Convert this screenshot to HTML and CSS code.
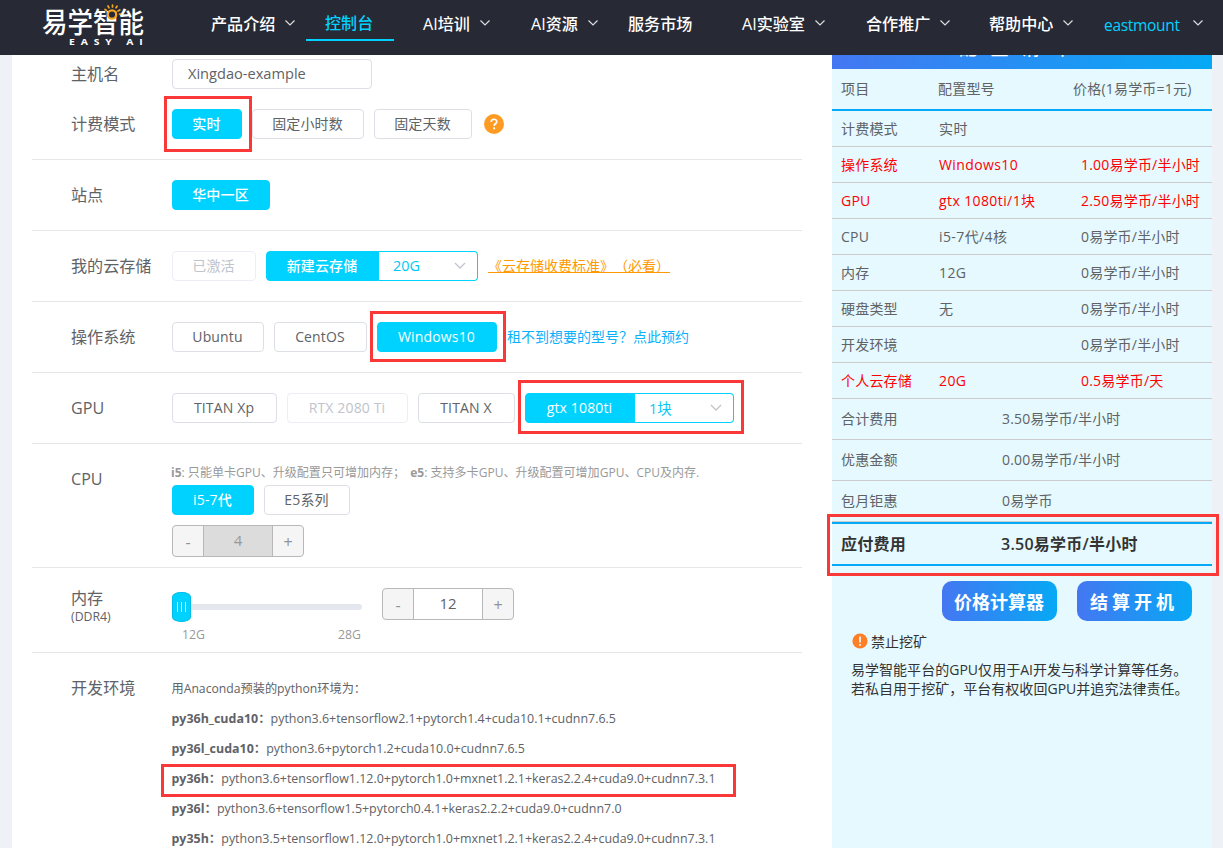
FILE: index.html
```html
<!DOCTYPE html>
<html lang="zh-CN">
<head>
  <meta charset="UTF-8" />
  <meta name="viewport" content="width=device-width, initial-scale=1.0"/>
  <title>易学智能 - 控制台</title>
  <link rel="stylesheet" href="styles.css">
</head>
<body>
  <header class="header">
    <div class="logo">
      <span class="logo-name">易学智能</span>
      <span class="logo-sub">EASY AI</span>
      <svg class="logo-sun" width="24" height="18" viewBox="0 0 24 18" fill="none" stroke="#f5a623" stroke-width="1.7" stroke-linecap="round">
        <circle cx="12" cy="10.5" r="4.2" fill="#272a35" stroke-width="2.2"/>
        <path d="M5 5.5l1.5 1M8 2l1 1.8M12.5 1v2M17 2.2l-1 1.6M19.8 6l-1.8 1M20.5 10h-1"/>
      </svg>
    </div>
    <nav class="nav">
      <a>产品介绍<svg class="caret" viewBox="0 0 10 6"><path d="M.5.5L5 5 9.5.5"/></svg></a>
      <a class="active">控制台</a>
      <a>AI培训<svg class="caret" viewBox="0 0 10 6"><path d="M.5.5L5 5 9.5.5"/></svg></a>
      <a>AI资源<svg class="caret" viewBox="0 0 10 6"><path d="M.5.5L5 5 9.5.5"/></svg></a>
      <a>服务市场</a>
      <a>AI实验室<svg class="caret" viewBox="0 0 10 6"><path d="M.5.5L5 5 9.5.5"/></svg></a>
      <a>合作推广<svg class="caret" viewBox="0 0 10 6"><path d="M.5.5L5 5 9.5.5"/></svg></a>
      <a>帮助中心<svg class="caret" viewBox="0 0 10 6"><path d="M.5.5L5 5 9.5.5"/></svg></a>
      <a class="user"><span>eastmount</span><svg class="caret" viewBox="0 0 10 6"><path d="M.5.5L5 5 9.5.5"/></svg></a>
    </nav>
  </header>

  <div class="page">
    <main class="form">
      <div class="row host">
        <label class="label">主机名</label>
        <input class="input" type="text" value="Xingdao-example">
      </div>

      <div class="row">
        <label class="label">计费模式</label>
        <div class="options">
          <button class="btn on w70">实时</button>
          <button class="btn w112">固定小时数</button>
          <button class="btn w98">固定天数</button>
          <svg class="help" width="20" height="20" viewBox="0 0 20 20">
            <circle cx="10" cy="10" r="10" fill="#ff9b22"/>
            <path d="M7.2 8c0-3.7 5.6-3.6 5.6-.2 0 2-2.7 1.9-2.7 4.1" fill="none" stroke="#fff" stroke-width="1.7"/>
            <circle cx="10.1" cy="14.3" r="1.1" fill="#fff"/>
          </svg>
        </div>
      </div>

      <div class="row">
        <label class="label">站点</label>
        <div class="options">
          <button class="btn on w98">华中一区</button>
        </div>
      </div>

      <div class="row">
        <label class="label">我的云存储</label>
        <div class="options">
          <button class="btn disabled w84">已激活</button>
          <div class="combo">
            <button class="btn on w113">新建云存储</button>
            <div class="select">20G<svg class="arrow" viewBox="0 0 12 7"><path d="M1 1l5 5 5-5"/></svg></div>
          </div>
          <a class="link-fee">《云存储收费标准》（必看）</a>
        </div>
      </div>

      <div class="row">
        <label class="label">操作系统</label>
        <div class="options">
          <button class="btn w92">Ubuntu</button>
          <button class="btn w93">CentOS</button>
          <button class="btn on w120">Windows10</button>
          <a class="link-book">租不到想要的型号？点此预约</a>
        </div>
      </div>

      <div class="row">
        <label class="label">GPU</label>
        <div class="options">
          <button class="btn w105">TITAN Xp</button>
          <button class="btn disabled w121">RTX 2080 Ti</button>
          <button class="btn w97">TITAN X</button>
          <div class="combo">
            <button class="btn on w110">gtx 1080ti</button>
            <div class="select">1块<svg class="arrow" viewBox="0 0 12 7"><path d="M1 1l5 5 5-5"/></svg></div>
          </div>
        </div>
      </div>

      <div class="row cpu">
        <label class="label">CPU</label>
        <div class="stack">
          <p class="tip"><b>i5</b>: 只能单卡GPU、升级配置只可增加内存； <b class="e5">e5</b>: 支持多卡GPU、升级配置可增加GPU、CPU及内存.</p>
          <div class="options">
            <button class="btn on w82">i5-7代</button>
            <button class="btn w86">E5系列</button>
          </div>
          <div class="stepper off"><span>-</span><span class="num">4</span><span>+</span></div>
        </div>
      </div>

      <div class="row memory">
        <label class="label">内存<small>(DDR4)</small></label>
        <div class="slider">
          <div class="track"><div class="handle"><i></i><i></i><i></i></div></div>
          <div class="scale"><span>12G</span><span>28G</span></div>
        </div>
        <div class="stepper"><span>-</span><span class="num">12</span><span>+</span></div>
      </div>

      <div class="row env">
        <label class="label">开发环境</label>
        <div class="env-list">
          <p class="intro">用Anaconda预装的python环境为：</p>
          <p><b>py36h_cuda10：</b>python3.6+tensorflow2.1+pytorch1.4+cuda10.1+cudnn7.6.5</p>
          <p><b>py36l_cuda10：</b>python3.6+pytorch1.2+cuda10.0+cudnn7.6.5</p>
          <p><b>py36h：</b>python3.6+tensorflow1.12.0+pytorch1.0+mxnet1.2.1+keras2.2.4+cuda9.0+cudnn7.3.1</p>
          <p><b>py36l：</b>python3.6+tensorflow1.5+pytorch0.4.1+keras2.2.2+cuda9.0+cudnn7.0</p>
          <p><b>py35h：</b>python3.5+tensorflow1.12.0+pytorch1.0+mxnet1.2.1+keras2.2.4+cuda9.0+cudnn7.3.1</p>
        </div>
      </div>
    </main>

    <aside class="bill">
      <h2 class="bill-title">配置清单</h2>
      <div class="bill-head"><span>项目</span><span>配置型号</span><span>价格(1易学币=1元)</span></div>
      <div class="item"><span>计费模式</span><span>实时</span><span></span></div>
      <div class="item red"><span>操作系统</span><span>Windows10</span><span>1.00易学币/半小时</span></div>
      <div class="item red"><span>GPU</span><span>gtx 1080ti/1块</span><span>2.50易学币/半小时</span></div>
      <div class="item"><span>CPU</span><span>i5-7代/4核</span><span>0易学币/半小时</span></div>
      <div class="item"><span>内存</span><span>12G</span><span>0易学币/半小时</span></div>
      <div class="item"><span>硬盘类型</span><span>无</span><span>0易学币/半小时</span></div>
      <div class="item"><span>开发环境</span><span></span><span>0易学币/半小时</span></div>
      <div class="item red"><span>个人云存储</span><span>20G</span><span>0.5易学币/天</span></div>
      <div class="sum"><span>合计费用</span><span>3.50易学币/半小时</span></div>
      <div class="sum"><span>优惠金额</span><span>0.00易学币/半小时</span></div>
      <div class="sum"><span>包月钜惠</span><span>0易学币</span></div>
      <div class="total"><span>应付费用</span><span>3.50易学币/半小时</span></div>
      <div class="actions">
        <button class="action">价格计算器</button>
        <button class="action wide">结算开机</button>
      </div>
      <div class="warn">
        <svg width="16" height="16" viewBox="0 0 16 16">
          <circle cx="8" cy="8" r="7.6" fill="#ff7f27"/>
          <path d="M8 3.5v6M8 11v1.7" stroke="#fff" stroke-width="1.6"/>
        </svg>
        <span>禁止挖矿</span>
      </div>
      <p class="notice">易学智能平台的GPU仅用于AI开发与科学计算等任务。<br>若私自用于挖矿，平台有权收回GPU并追究法律责任。</p>
    </aside>
  </div>

  <!-- 红框标注 -->
  <div class="mark mark-mode"></div>
  <div class="mark mark-os"></div>
  <div class="mark mark-gpu"></div>
  <div class="mark mark-env"></div>
  <div class="mark mark-total"></div>
</body>
</html>
```
FILE: styles.css
```css
* {
  box-sizing: border-box;
}

body {
  margin: 0;
  height: 848px;
  overflow: hidden;
  position: relative;
  background: #eef1f6;
  color: #606266;
  font-family: "Open Sans", "Noto Sans CJK SC", sans-serif;
  font-size: 14px;
}

p, h2 {
  margin: 0;
}

/* header */
.header {
  position: fixed;
  top: 0;
  left: 0;
  z-index: 10;
  width: 100%;
  height: 55px;
  background: #272a35;
  display: flex;
}

.logo {
  position: relative;
  width: 211px;
  padding: 8px 0 0 42px;
  color: #fff;
}

.logo-name {
  display: block;
  width: 103px;
  font-size: 25.5px;
  font-weight: 500;
  line-height: 26px;
  height: 26px;
  transform: scaleY(1.1);
  transform-origin: 0 0;
}

.logo-sub {
  position: absolute;
  left: 69px;
  top: 38px;
  font-size: 8px;
  font-weight: 700;
  line-height: 8px;
  letter-spacing: 4.5px;
  white-space: pre;
  transform: scaleX(1.3);
  transform-origin: 0 0;
}

.logo-sun {
  position: absolute;
  left: 100px;
  top: 4px;
}

.nav {
  display: grid;
  grid-template-columns: 114px 98px 108px 97px 114px 124px 123px 115px 119px;
  height: 46px;
  color: #fff;
  font-size: 16.1px;
  font-weight: 500;
}

.nav a {
  display: flex;
  align-items: center;
  gap: 10px;
  white-space: nowrap;
}

.nav .active {
  color: #00d2ff;
  width: 88px;
  height: 41px;
  margin-left: -19px;
  padding: 5px 0 0 19px;
  border-bottom: 2px solid #00d2ff;
}

.nav .user {
  color: #00d2ff;
  font-size: 15.5px;
  font-weight: 400;
  letter-spacing: -0.3px;
  gap: 13px;
}

.nav .user span {
  padding-top: 4px;
}

.caret {
  width: 10px;
  height: 6px;
  fill: none;
  stroke: #ddd;
  stroke-width: 1.2;
}

/* layout */
.page {
  display: flex;
  height: 819px;
  margin: 29px 11px 0 12px;
  background: #fff;
}

.form {
  width: 770px;
  margin: 0 30px 0 20px;
}

.row {
  display: flex;
  height: 71px;
  padding: 20px 0;
  border-bottom: 1px solid #e6e6e6;
}

.row.host {
  height: 60px;
  padding: 30px 0 0;
  border-bottom: 0;
}

.label {
  width: 140px;
  padding-left: 39px;
  font-size: 16.1px;
  line-height: 31px;
  flex-shrink: 0;
}

.input {
  width: 200px;
  height: 30px;
  padding: 0 15px 2px;
  border: 1px solid #dcdfe6;
  border-radius: 4px;
  font: inherit;
  font-size: 14.6px;
  color: #606266;
}

.options {
  display: flex;
  gap: 10px;
}

.btn {
  height: 30px;
  padding: 0 1px 2px 0;
  border: 1px solid #dcdfe6;
  border-radius: 4px;
  background: #fff;
  color: #606266;
  font: inherit;
  font-size: 14px;
  letter-spacing: 0.15px;
  white-space: nowrap;
}

.btn.on {
  background: #00d2ff;
  border-color: #00d2ff;
  color: #fff;
  font-weight: 500;
}

.btn.disabled {
  border-color: #ebeef5;
  color: #c0c4cc;
}

.w70 { width: 70px; }
.w82 { width: 82px; }
.w84 { width: 84px; }
.w86 { width: 86px; }
.w92 { width: 92px; }
.w93 { width: 93px; }
.w97 { width: 97px; }
.w98 { width: 98px; }
.w105 { width: 105px; }
.w110 { width: 110px; }
.w112 { width: 112px; }
.w113 { width: 113px; }
.w120 { width: 120px; }
.w121 { width: 121px; }

.help {
  margin: 5px 0 0 2px;
}

.combo {
  display: flex;
}

.combo .btn {
  border-radius: 4px 0 0 4px;
}

.select {
  display: flex;
  align-items: center;
  justify-content: space-between;
  width: 99px;
  height: 30px;
  padding: 0 11px 1px 14px;
  border: 1px solid #00d2ff;
  border-left: 0;
  border-radius: 0 4px 4px 0;
  color: #00c8f5;
  font-size: 14.4px;
}

.arrow {
  width: 12px;
  height: 7px;
  fill: none;
  stroke: #c0c4cc;
  stroke-width: 1.3;
}

.link-fee,
.link-book {
  line-height: 30px;
  white-space: nowrap;
}

.link-fee {
  color: #ff9900;
  text-decoration: underline;
  text-spacing-trim: space-all;
}

.link-book {
  color: #0ab1fa;
}

/* cpu */
.row.cpu {
  height: 124px;
}

.tip {
  height: 21px;
  margin-left: -1px;
  font-size: 12.04px;
  line-height: 17px;
  color: #999;
  white-space: nowrap;
}

.e5 {
  margin-left: 2px;
}

.stepper {
  display: grid;
  grid-template-columns: 30px 70px 30px;
  width: 132px;
  height: 32px;
  border: 1px solid #b8b8b8;
  border-radius: 4px;
  background: #f5f5f5;
  color: #909399;
  font-size: 16px;
  line-height: 32px;
  text-align: center;
  overflow: hidden;
}

.stepper .num {
  border: solid #b8b8b8;
  border-width: 0 1px;
  background: #fff;
  color: #606266;
  font-size: 15px;
  line-height: 29px;
}

.cpu .stepper {
  margin-top: 10px;
}

.stepper.off .num {
  background: #dcdcdc;
  color: #999;
}

/* memory */
.row.memory {
  height: 85px;
}

.memory .label {
  line-height: 20px;
}

.memory small {
  display: block;
  font-size: 12.3px;
  line-height: 18px;
}

.slider {
  width: 190px;
  margin-right: 20px;
}

.track {
  height: 6px;
  margin-top: 16px;
  border-radius: 3px;
  background: #e4e7ed;
}

.handle {
  position: relative;
  top: -12px;
  display: flex;
  align-items: center;
  justify-content: center;
  gap: 3px;
  width: 19px;
  height: 30px;
  border: 1px solid #00bde9;
  border-radius: 9px / 5px;
  background: #00d2ff;
}

.handle i {
  width: 1px;
  height: 10px;
  background: #fff;
}

.scale {
  display: flex;
  justify-content: space-between;
  padding: 16px 1px 0 10px;
  font-size: 12.3px;
  line-height: 18px;
  color: #999;
}

/* env */
.row.env {
  height: auto;
  border-bottom: 0;
}

.env-list {
  margin-left: -0.5px;
  font-size: 12.45px;
  line-height: 30px;
  padding-top: 1px;
  white-space: nowrap;
}

.env-list .intro {
  font-size: 12.2px;
}

/* bill */
.bill {
  width: 380px;
  background: #e5f9fe;
}

.bill-title {
  height: 40px;
  background: linear-gradient(90deg, #4477f2, #06a9f5);
  color: #fff;
  font-size: 18px;
  font-weight: 500;
  line-height: 39px;
  letter-spacing: 13.5px;
  padding-left: 127px;
}

.bill-head {
  display: grid;
  grid-template-columns: 97px 135px 1fr;
  height: 42px;
  padding-left: 9px;
  border-bottom: 2px solid #06a9f5;
  line-height: 40px;
  letter-spacing: 0.2px;
}

.item {
  display: grid;
  grid-template-columns: 98px 142px 1fr;
  height: 36px;
  padding-left: 9px;
  border-bottom: 1px solid #ccc;
  line-height: 36px;
  letter-spacing: 0.2px;
  white-space: nowrap;
}

.item span:nth-child(2) {
  letter-spacing: 0.4px;
}

.item.red {
  color: #f00;
}

.sum,
.total {
  display: grid;
  grid-template-columns: 161px 1fr;
  height: 41px;
  padding-left: 9px;
  border-bottom: 1px solid #ccc;
  line-height: 39px;
  letter-spacing: 0.15px;
}

.total {
  grid-template-columns: 160px 1fr;
  height: 44px;
  border: solid #06a9f5;
  border-width: 2px 0;
  color: #333;
  font-size: 16px;
  font-weight: 600;
  line-height: 40px;
  letter-spacing: 0.25px;
}

.actions {
  display: flex;
  justify-content: flex-end;
  gap: 20px;
  padding: 15px 20px 0 0;
}

.action {
  width: 115px;
  height: 40px;
  padding: 0 1px 1px 0;
  border: 0;
  border-radius: 10px;
  background: linear-gradient(90deg, #4477f2, #06a9f5);
  color: #fff;
  font: inherit;
  font-size: 18px;
  font-weight: 700;
}

.action.wide {
  letter-spacing: 4px;
}

.warn {
  display: flex;
  align-items: center;
  gap: 3px;
  height: 20px;
  margin: 10px 0 0 20px;
  color: #333;
}

.notice {
  margin: 9px 0 0 19px;
  color: #333;
  line-height: 19px;
  letter-spacing: 0.03px;
  white-space: nowrap;
}

/* marks */
.mark {
  position: absolute;
  border: 3px solid #fb3838;
}

.mark-mode { left: 164px; top: 96px; width: 88px; height: 56px; }
.mark-os { left: 370px; top: 311px; width: 136px; height: 51px; }
.mark-gpu { left: 518px; top: 380px; width: 226px; height: 54px; }
.mark-env { left: 161px; top: 764px; width: 575px; height: 33px; }
.mark-total { left: 827px; top: 514px; width: 392px; height: 62px; }
```
